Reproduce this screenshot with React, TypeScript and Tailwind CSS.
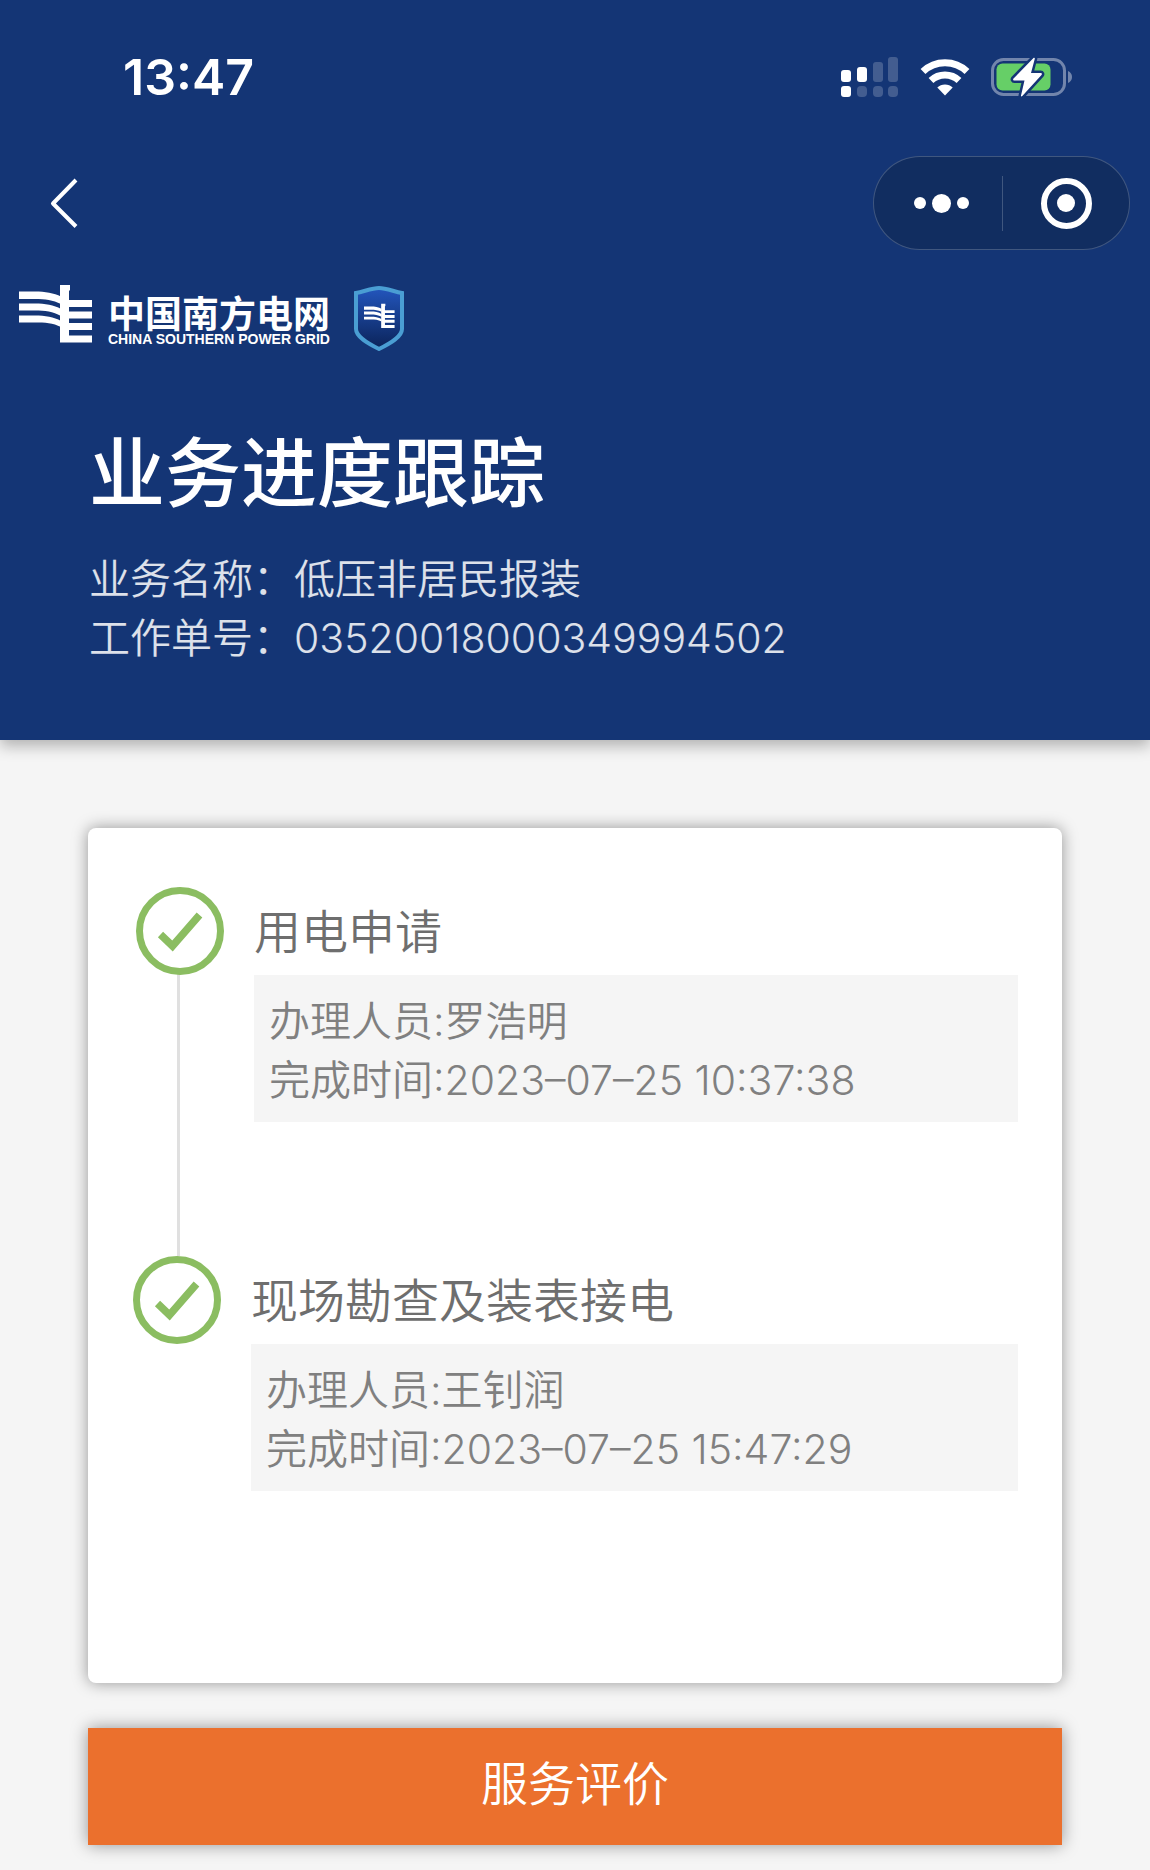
type Step = {
  title: string;
  staff: string;
  time: string;
};

const steps: Step[] = [
  { title: '用电申请', staff: '罗浩明', time: '2023–07–25 10:37:38' },
  { title: '现场勘查及装表接电', staff: '王钊润', time: '2023–07–25 15:47:29' },
];

function SignalIcon() {
  return (
    <svg className="w-[58px] h-10" viewBox="0 0 58 40" fill="#fff" aria-hidden="true">
      <rect x="0" y="13" width="10" height="12" rx="3" />
      <rect x="16" y="10" width="10" height="15" rx="3" />
      <rect x="32" y="5" width="10" height="20" rx="3" opacity="0.2" />
      <rect x="47" y="0" width="10" height="25" rx="3" opacity="0.2" />
      <rect x="0" y="29" width="10" height="11" rx="3" />
      <rect x="16" y="29" width="10" height="11" rx="4" opacity="0.2" />
      <rect x="32" y="29" width="10" height="11" rx="4" opacity="0.2" />
      <rect x="47" y="29" width="10" height="11" rx="4" opacity="0.2" />
    </svg>
  );
}

function WifiIcon() {
  return (
    <svg className="w-[50px] h-[37px]" viewBox="0 0 50 37" aria-hidden="true">
      <path d="M3 12.5a32 32 0 0 1 44 0" fill="none" stroke="#fff" strokeWidth="7" />
      <path d="M11 21.5a20.500 20.500 0 0 1 28 0" fill="none" stroke="#fff" strokeWidth="7" />
      <path d="M25 36.500 17.300 28.600a11 11 0 0 1 15.400 0z" fill="#fff" />
    </svg>
  );
}

function BatteryIcon() {
  return (
    <svg className="w-[82px] h-10" viewBox="0 0 82 40" aria-hidden="true">
      <rect x="1.500" y="2.500" width="72" height="35" rx="11" fill="none" stroke="#fff" strokeOpacity="0.4" strokeWidth="3" />
      <path d="M77 14c2.600 1 4 3.400 4 6s-1.400 5-4 6z" fill="#fff" fillOpacity="0.4" />
      <rect x="5.500" y="6.500" width="54" height="27" rx="6" fill="#66cf67" />
      <path
        d="M42.500 1 22.500 21.500c-.8.900-.3 2 .8 2h10.200L30 38.500c-.2.900.7 1.300 1.300.6L50.500 18c.8-.9.300-2-.8-2H40l3.800-14.300c.2-.9-.7-1.400-1.300-.7z"
        fill="#fff"
        stroke="#143575"
        strokeWidth="5"
        strokeLinejoin="round"
        paintOrder="stroke"
      />
    </svg>
  );
}

function GridMark({ className }: { className: string }) {
  return (
    <svg className={className} viewBox="0 0 74 58" fill="#fff" aria-hidden="true">
      <path d="M0 6.500h16c10 0 19 1.500 26 5v7.500c-8-4-16-5-26-5H0z" />
      <path d="M0 18.500h16c10 0 19 1.500 26 5.500v7c-8-4.500-16-5.500-26-5.500H0z" />
      <path d="M0 30.500h16c10 0 19 1.500 26 5.500v6c-8-4-16-4.500-26-4.500H0z" />
      <path d="M41 0h10v5l-1 1v9h23v7H50v4.500h23v7H50V38h23v7H50v5.500h23v7H41z" />
    </svg>
  );
}

function Shield() {
  return (
    <div className="relative flex h-[65px] w-[50px] items-center justify-center">
      <svg className="absolute inset-0 h-full w-full" viewBox="0 0 50 65" aria-hidden="true">
        <defs>
          <linearGradient id="shield" x1="0" y1="0" x2="0" y2="1">
            <stop offset="0" stopColor="#2356bd" />
            <stop offset="1" stopColor="#0b2358" />
          </linearGradient>
        </defs>
        <path
          d="M2 7C10 5.500 18 2 25 2s15 3.500 23 5v36c0 8-12 14.500-23 20C14 57.500 2 51 2 43z"
          fill="url(#shield)"
          stroke="#4a9ed3"
          strokeWidth="4"
        />
      </svg>
      <GridMark className="relative mb-1 h-[26px] w-[31px]" />
    </div>
  );
}

function CheckCircle() {
  return (
    <svg className="h-22 w-22 shrink-0" viewBox="0 0 88 88" fill="none" stroke="#8bbd61" aria-hidden="true">
      <circle cx="44" cy="44" r="40.500" fill="#fff" strokeWidth="7" />
      <path d="M24.500 47.500 36.500 59 63.500 28" strokeWidth="7.500" />
    </svg>
  );
}

export default function App() {
  return (
    <div className="min-h-screen bg-[#f5f5f5] pb-[25px] font-['Inter','Noto_Sans_CJK_SC',sans-serif]">
      <header className="bg-[#143575] pb-[72px] text-white shadow-[0_6px_14px_rgba(0,0,0,0.28)]">
        {/* Status bar */}
        <div className="flex h-[154px] items-center justify-between pr-[77px] pl-[123px]">
          <span className="text-[50px] font-semibold">13:47</span>
          <div className="flex items-center gap-[21px]">
            <SignalIcon />
            <WifiIcon />
            <BatteryIcon />
          </div>
        </div>

        {/* Nav */}
        <nav className="mt-0.5 flex items-center justify-between pr-5 pl-[50px]">
          <button type="button" aria-label="返回">
            <svg
              className="h-[50px] w-7"
              viewBox="0 0 28 50"
              fill="none"
              stroke="#fff"
              strokeWidth="4"
              strokeLinejoin="round"
              aria-hidden="true"
            >
              <path d="M26 2 3 25.500l23 23" />
            </svg>
          </button>
          <div className="flex h-[94px] w-[257px] items-center rounded-full border border-white/20 bg-[#112d60]">
            <button type="button" aria-label="更多" className="flex w-32 items-center justify-center gap-1.5 pl-1.5">
              <span className="h-3 w-3 rounded-full bg-white" />
              <span className="h-[19px] w-[19px] rounded-full bg-white" />
              <span className="h-3 w-3 rounded-full bg-white" />
            </button>
            <span className="h-[55px] w-px bg-white/20" />
            <button type="button" aria-label="关闭" className="flex flex-1 items-center justify-center">
              <span className="flex h-[51px] w-[51px] items-center justify-center rounded-full border-6 border-white">
                <span className="h-[18px] w-[18px] rounded-full bg-white" />
              </span>
            </button>
          </div>
        </nav>

        {/* Logo */}
        <div className="mt-[35px] flex h-[66px] items-center pl-[19px]">
          <GridMark className="mb-2 h-[58px] w-[74px]" />
          <div className="mt-1 ml-[15px] w-[228px] whitespace-nowrap">
            <div className="text-[37px] leading-[37px] font-bold">中国南方电网</div>
            <div className="font-['Liberation_Sans',sans-serif] text-[14px] leading-3 font-bold">CHINA SOUTHERN POWER GRID</div>
          </div>
          <div className="ml-[18px]">
            <Shield />
          </div>
        </div>

        {/* Order info */}
        <div className="mt-[73px] px-[89px]">
          <h1 className="text-[76px] leading-[98px] font-medium">业务进度跟踪</h1>
          <div className="mt-7 text-[41px] leading-[59px] font-[350] text-white/85">
            <p>业务名称：低压非居民报装</p>
            <p>工作单号：03520018000349994502</p>
          </div>
        </div>
      </header>

      <main className="px-[88px] pt-[88px]">
        <ol className="rounded-lg bg-white pt-[59px] pr-11 pb-[192px] pl-[89px] shadow-[0_0_16px_rgba(0,0,0,0.4)]">
          {steps.map((step) => (
            <li key={step.title} className="border-[#e0e0e0] not-last:border-l-3 not-last:pb-[134px]">
              <div className="-ml-11 flex items-center gap-[30px]">
                <CheckCircle />
                <h2 className="text-[47px] leading-[59px] font-[350] text-[#6e6e6e]">{step.title}</h2>
              </div>
              <div className="ml-[74px] bg-[#f5f5f5] px-[15px] pt-[17px] pb-3 text-[41px] leading-[59px] font-[350] text-[#808080]">
                <p>办理人员:{step.staff}</p>
                <p>完成时间:{step.time}</p>
              </div>
            </li>
          ))}
        </ol>

        <button
          type="button"
          className="mt-[45px] h-[117px] w-full bg-[#eb702d] pb-1 text-[47px] font-[350] text-white shadow-[0_0_16px_rgba(0,0,0,0.4)]"
        >
          服务评价
        </button>
      </main>
    </div>
  );
}
